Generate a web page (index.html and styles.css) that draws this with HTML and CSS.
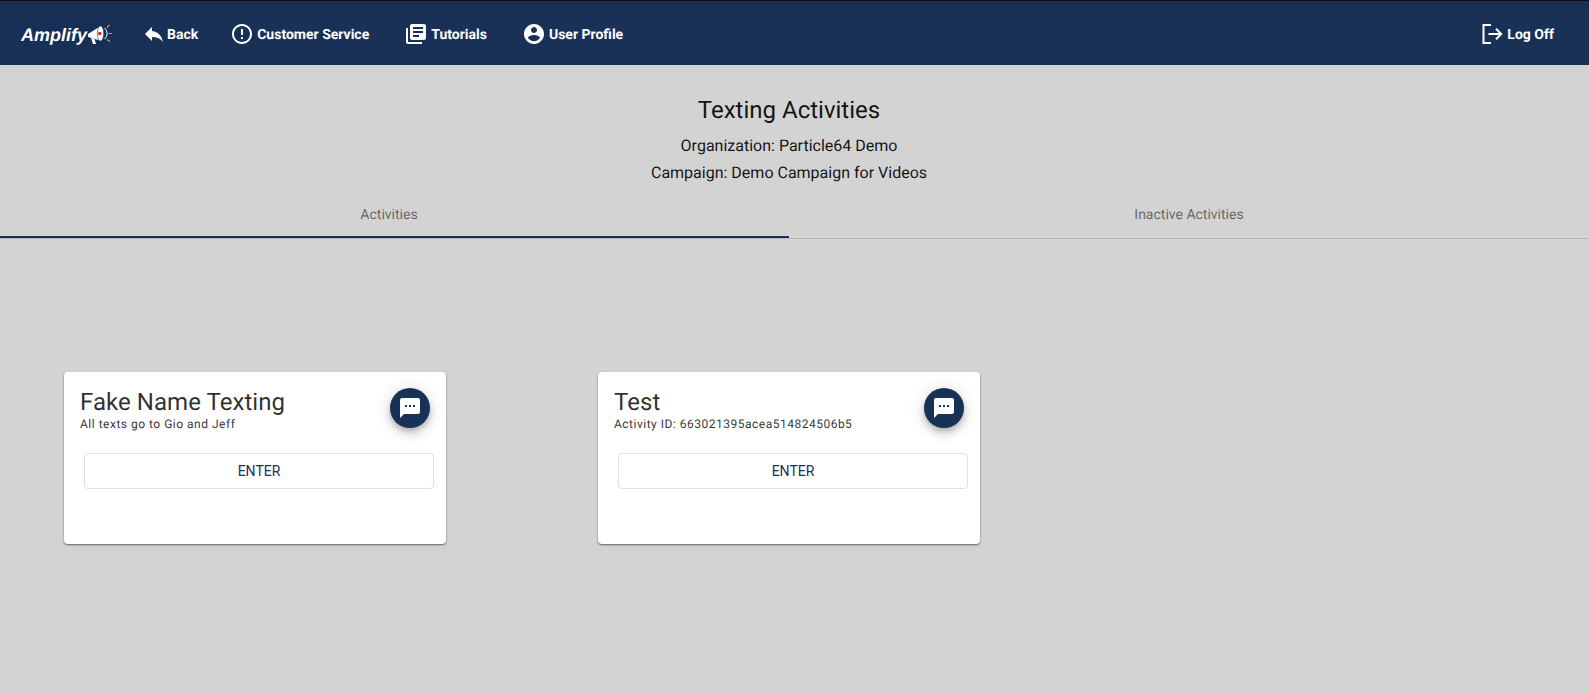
FILE: index.html
```html
<!DOCTYPE html>
<html lang="en">
<head>
<meta charset="utf-8">
<title>Texting Activities</title>
<link rel="stylesheet" href="styles.css">
</head>
<body>
<header class="topbar">
  <div class="logo">
    <span class="logo-text">Amplify</span>
    <svg class="logo-mark" viewBox="0 0 25 22" width="25" height="22" aria-hidden="true">
      <path d="M0 10 12 2.500v14L0 13z" fill="#fff"/>
      <path d="M3 14l2 6h3l-1.500-5z" fill="#fff"/>
      <ellipse cx="12.500" cy="9.500" rx="3.200" ry="7.500" fill="#fff" stroke="#143058" stroke-width="0.600"/>
      <circle cx="11.800" cy="9.500" r="1.800" fill="#b5303f"/>
      <path d="M16.500 4a7 7 0 0 1 0 11" fill="none" stroke="#fff" stroke-width="1"/>
      <path d="M19 3.500 21.500 0.800M20.500 9.500h3.500M19 15.500l3 2" stroke="#d9a441" stroke-width="1.200" fill="none"/>
    </svg>
  </div>
  <nav class="nav">
    <a class="nav-item nav-back">
      <svg class="icon" viewBox="0 0 24 24"><path d="M10 9V5l-7 7 7 7v-4.100c5 0 8.500 1.600 11 5.100-1-5-4-10-11-11z"/></svg>
      <span>Back</span>
    </a>
    <a class="nav-item">
      <svg class="icon" viewBox="0 0 24 24"><path d="M11 15h2v2h-2zm0-8h2v6h-2zm.99-5C6.470 2 2 6.480 2 12s4.470 10 9.990 10C17.520 22 22 17.520 22 12S17.520 2 11.990 2zM12 20c-4.420 0-8-3.580-8-8s3.580-8 8-8 8 3.580 8 8-3.580 8-8 8z"/></svg>
      <span>Customer Service</span>
    </a>
    <a class="nav-item">
      <svg class="icon" viewBox="0 0 24 24"><path d="M4 6H2v14c0 1.100.9 2 2 2h14v-2H4V6zm16-4H8c-1.100 0-2 .9-2 2v12c0 1.100.9 2 2 2h12c1.100 0 2-.9 2-2V4c0-1.100-.9-2-2-2zm-1 9H9V9h10v2zm-4 4H9v-2h6v2zm4-8H9V5h10v2z"/></svg>
      <span>Tutorials</span>
    </a>
    <a class="nav-item">
      <svg class="icon" viewBox="0 0 24 24"><path d="M12 2C6.480 2 2 6.480 2 12s4.480 10 10 10 10-4.480 10-10S17.520 2 12 2zm0 3c1.660 0 3 1.340 3 3s-1.340 3-3 3-3-1.340-3-3 1.340-3 3-3zm0 14.200c-2.500 0-4.710-1.280-6-3.220.03-1.990 4-3.080 6-3.080 1.990 0 5.970 1.090 6 3.080-1.290 1.940-3.500 3.220-6 3.220z"/></svg>
      <span>User Profile</span>
    </a>
  </nav>
  <a class="nav-item logoff">
    <svg class="icon" viewBox="0 0 24 24"><path d="M11 3H3.500v18H11M8.500 12H21M16 6.800 21.200 12 16 17.200" fill="none" stroke="#fff" stroke-width="2"/></svg>
    <span>Log Off</span>
  </a>
</header>

<main>
  <section class="heading">
    <h1>Texting Activities</h1>
    <p>Organization: Particle64 Demo</p>
    <p>Campaign: Demo Campaign for Videos</p>
  </section>

  <div class="tabs">
    <div class="tab tab-active"><span>Activities</span></div>
    <div class="tab"><span>Inactive Activities</span></div>
  </div>

  <section class="cards">
    <article class="card">
      <div class="card-head">
        <div class="card-text">
          <h2>Fake Name Texting</h2>
          <p>All texts go to Gio and Jeff</p>
        </div>
        <span class="fab">
          <svg viewBox="0 0 24 24" width="24" height="24"><path d="M20 2H4c-1.100 0-1.990.9-1.990 2L2 22l4-4h14c1.100 0 2-.9 2-2V4c0-1.100-.9-2-2-2zM9 11H7V9h2v2zm4 0h-2V9h2v2zm4 0h-2V9h2v2z"/></svg>
        </span>
      </div>
      <button class="enter">ENTER</button>
    </article>
    <article class="card">
      <div class="card-head">
        <div class="card-text">
          <h2>Test</h2>
          <p>Activity ID: 663021395acea514824506b5</p>
        </div>
        <span class="fab">
          <svg viewBox="0 0 24 24" width="24" height="24"><path d="M20 2H4c-1.100 0-1.990.9-1.990 2L2 22l4-4h14c1.100 0 2-.9 2-2V4c0-1.100-.9-2-2-2zM9 11H7V9h2v2zm4 0h-2V9h2v2zm4 0h-2V9h2v2z"/></svg>
        </span>
      </div>
      <button class="enter">ENTER</button>
    </article>
  </section>
</main>
</body>
</html>
```

FILE: styles.css
```css
* { box-sizing: border-box; }

html, body {
  margin: 0;
  height: 100%;
  overflow: hidden;
}

body {
  background: #d3d3d3;
  font-family: Roboto, "Liberation Sans", sans-serif;
  color: #000;
  text-rendering: geometricPrecision;
}

.topbar {
  display: flex;
  align-items: center;
  height: 65px;
  background: #1a3157;
  border-top: 1px solid #0c0c0c;
  padding: 0 35px 0 21px;
  color: #fff;
}

.logo {
  display: flex;
  align-items: center;
  width: 91px;
  height: 22px;
  margin-top: 3px;
  background: #143058;
  overflow: hidden;
}

.logo-text {
  font-family: "Liberation Sans", Arial, sans-serif;
  font-size: 18px;
  font-weight: 700;
  font-style: italic;
  line-height: 22px;
  color: #fff;
}

.logo-mark { flex: none; margin-left: 1px; }

.nav {
  display: flex;
  align-items: center;
  gap: 35px;
  margin-left: 30px;
  padding-top: 2px;
}

.nav-item {
  display: flex;
  align-items: center;
  gap: 3px;
  font-size: 14px;
  font-weight: 700;
  line-height: 24px;
  color: #fff;
}

.nav-item span { padding-top: 1px; }

.nav-back { gap: 1px; margin-right: -3px; }

.icon {
  display: block;
  flex: none;
  width: 24px;
  height: 24px;
  fill: #fff;
}

.logoff { margin-left: auto; padding-top: 2px; }

.heading {
  padding: 30px 11px 0 0;
  text-align: center;
  color: rgba(0, 0, 0, 0.92);
}

.heading h1 {
  margin: 0 0 7px;
  font-size: 24px;
  font-weight: 400;
  line-height: 30px;
}

.heading p {
  margin: 0;
  font-size: 16px;
  font-weight: 400;
  line-height: 27px;
}

.tabs {
  display: grid;
  grid-template-columns: 789px 1fr;
  height: 49px;
  margin-top: 4px;
  border-bottom: 1px solid #b5b5b5;
  font-size: 14px;
  font-weight: 400;
  color: rgba(0, 0, 0, 0.54);
}

.tab {
  display: flex;
  align-items: center;
  justify-content: center;
  height: 48px;
  padding-top: 1px;
}

.tab-active {
  padding: 3px 11px 0 0;
  border-bottom: 2px solid #1a3157;
}

.cards {
  display: flex;
  gap: 152px;
  padding: 133px 0 0 64px;
}

.card {
  width: 382px;
  height: 172px;
  padding: 16px 12px 0 16px;
  background: #fff;
  border-radius: 4px;
  box-shadow: 0 1px 2px rgba(0, 0, 0, 0.55);
}

.card-head {
  display: flex;
  justify-content: space-between;
  align-items: flex-start;
  padding-right: 4px;
}

.card-text h2 {
  margin: 0;
  font-size: 24px;
  font-weight: 400;
  line-height: 28px;
  letter-spacing: 0.05px;
  color: rgba(0, 0, 0, 0.82);
}

.card-text p {
  margin: 1px 0 0;
  font-size: 12px;
  font-weight: 400;
  line-height: 14px;
  letter-spacing: 0.5px;
  color: rgba(0, 0, 0, 0.82);
}

.fab {
  display: flex;
  align-items: center;
  justify-content: center;
  width: 40px;
  height: 40px;
  border-radius: 50%;
  background: #1a3157;
  box-shadow: 0 3px 5px -1px rgba(0, 0, 0, 0.2), 0 6px 10px 0 rgba(0, 0, 0, 0.14), 0 1px 18px 0 rgba(0, 0, 0, 0.12);
}

.fab svg { fill: #fff; }

.enter {
  display: block;
  width: 350px;
  height: 36px;
  margin: 22px 0 0 4px;
  background: #fff;
  border: 1px solid #e0e0e0;
  border-radius: 4px;
  font-family: inherit;
  font-size: 14px;
  font-weight: 400;
  color: #1a3157;
  padding: 0;
}
```
